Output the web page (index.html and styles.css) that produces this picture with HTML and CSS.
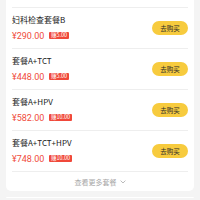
FILE: index.html
```html
<!DOCTYPE html>
<html lang="zh">
<head>
<meta charset="utf-8">
<link rel="stylesheet" href="styles.css">
</head>
<body>
<div class="page">
  <div class="card">
    <div class="item">
      <div class="info">
        <div class="title">妇科检查套餐B</div>
        <div class="price-row"><span class="price">¥290.00</span><span class="tag">赚5.00</span></div>
      </div>
      <div class="buy">去购买</div>
    </div>
    <div class="item">
      <div class="info">
        <div class="title">套餐A+TCT</div>
        <div class="price-row"><span class="price">¥448.00</span><span class="tag">赚5.00</span></div>
      </div>
      <div class="buy">去购买</div>
    </div>
    <div class="item">
      <div class="info">
        <div class="title">套餐A+HPV</div>
        <div class="price-row"><span class="price">¥582.00</span><span class="tag">赚10.00</span></div>
      </div>
      <div class="buy">去购买</div>
    </div>
    <div class="item">
      <div class="info">
        <div class="title">套餐A+TCT+HPV</div>
        <div class="price-row"><span class="price">¥748.00</span><span class="tag">赚10.00</span></div>
      </div>
      <div class="buy">去购买</div>
    </div>
    <div class="more">查看更多套餐<svg class="chev" width="6" height="4" viewBox="0 0 6 4"><path d="M0.6 0.6 L3 3 L5.4 0.6" fill="none" stroke="#aaa" stroke-width="0.8"/></svg></div>
  </div>
  <div class="card next"></div>
</div>
</body>
</html>
```
FILE: styles.css
```css
html, body {
  margin: 0;
  padding: 0;
  background: #f4f4f4;
}
body {
  width: 200px;
  height: 200px;
  overflow: hidden;
  font-family: "Noto Sans CJK SC", "Noto Sans", sans-serif;
}
.page {
  padding: 0 6px;
}
.card {
  background: #fff;
  border-radius: 0 0 5px 5px;
  padding: 7px 6px 0;
}
.card.next {
  margin-top: 6px;
  height: 1px;
  border-radius: 5px 5px 0 0;
  padding: 0;
}
.item {
  display: flex;
  align-items: center;
  justify-content: space-between;
  border-top: 1px solid #eeeeee;
  padding: 5.5px 0 6.5px;
}
.title {
  font-size: 8px;
  line-height: 11px;
  color: #222;
  margin-bottom: 5px;
  white-space: nowrap;
}
.price-row {
  display: flex;
  align-items: center;
  height: 12px;
}
.price {
  font-family: Roboto, "Noto Sans", sans-serif;
  font-size: 9px;
  color: #f04c3b;
  line-height: 12px;
}
.tag {
  margin-left: 4.5px;
  background: #f0483a;
  color: #fff;
  font-size: 5.5px;
  line-height: 7px;
  height: 7px;
  padding: 0 2px;
  border-radius: 1px;
  white-space: nowrap;
}
.buy {
  width: 36px;
  height: 14px;
  border-radius: 7px;
  background: #f7cb3e;
  color: #2a2a2a;
  font-size: 6.5px;
  line-height: 14px;
  text-align: center;
}
.more {
  border-top: 1px solid #eeeeee;
  height: 19px;
  display: flex;
  align-items: center;
  justify-content: center;
  font-size: 7px;
  color: #a8a8a8;
  gap: 3px;
}
.chev {
  display: block;
}
```
